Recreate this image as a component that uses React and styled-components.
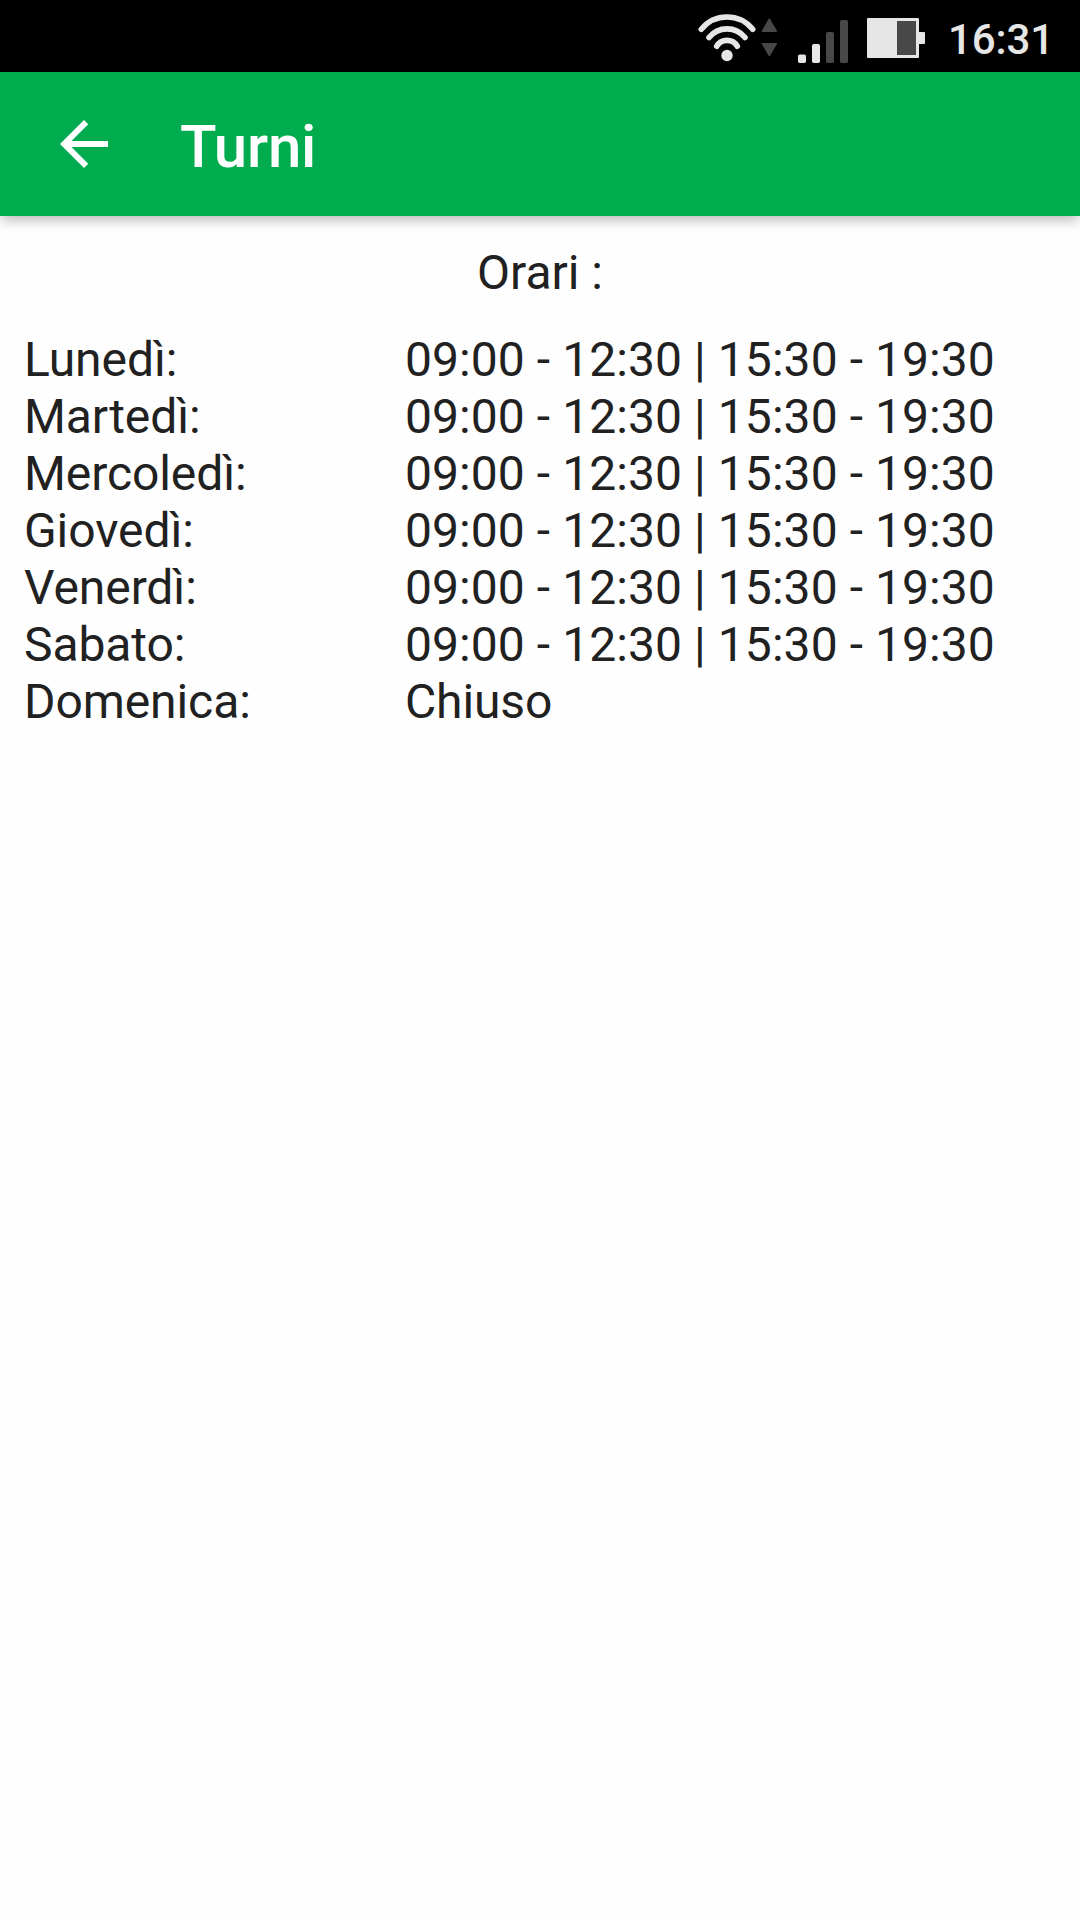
import React from "react";
import styled, { createGlobalStyle } from "styled-components";

const GlobalStyle = createGlobalStyle`
  body {
    margin: 0;
    background: #fefefe;
    font-family: Roboto, "Noto Sans", sans-serif;
    color: #212121;
  }
`;

const Screen = styled.div`
  display: flex;
  flex-direction: column;
  width: 1080px;
  height: 1920px;
  overflow: hidden;
  background: #fefefe;
`;

const StatusBar = styled.div`
  display: flex;
  justify-content: flex-end;
  flex: none;
  gap: 18px;
  height: 72px;
  padding-right: 27px;
  box-sizing: border-box;
  background: #000;
`;

const StatusIcons = styled.svg`
  flex: none;
  display: block;
  width: 240px;
  height: 72px;
`;

const Clock = styled.time`
  width: 105px;
  padding-top: 4px;
  text-align: right;
  font-size: 42px;
  font-weight: 500;
  letter-spacing: -0.1px;
  line-height: 72px;
  color: #e6e6e6;
`;

const AppBar = styled.header`
  display: flex;
  align-items: center;
  flex: none;
  gap: 60px;
  height: 144px;
  padding-left: 48px;
  box-sizing: border-box;
  background: #00ac4e;
  box-shadow: 0 5px 12px -1px rgba(0, 0, 0, 0.28);
`;

const BackButton = styled.button`
  display: flex;
  flex: none;
  padding: 0;
  border: 0;
  background: none;
  color: #fff;

  svg {
    width: 72px;
    height: 72px;
    fill: currentColor;
  }
`;

const Title = styled.h1`
  margin: 0;
  padding-top: 6px;
  font-size: 60px;
  font-weight: 500;
  letter-spacing: -0.25px;
  line-height: 72px;
  color: #fff;
`;

const Content = styled.main`
  display: flex;
  flex-direction: column;
  gap: 30px;
  padding: 28px 24px 0;
  font-size: 48px;
  line-height: 57px;
`;

const Heading = styled.div`
  text-align: center;
`;

const Schedule = styled.div`
  display: flex;
  flex-direction: column;
`;

const DayRow = styled.div`
  display: grid;
  grid-template-columns: 381px 1fr;
  white-space: pre;
`;

const Day = styled.span`
  letter-spacing: -0.08px;
`;

const Hours = styled.span`
  letter-spacing: ${(p) => (p.$closed ? "-0.12px" : "0.07px")};
`;

const OPEN = "09:00 - 12:30 | 15:30 - 19:30";
const CLOSED = "Chiuso";

const DAYS = [
  ["Lunedì:", OPEN],
  ["Martedì:", OPEN],
  ["Mercoledì:", OPEN],
  ["Giovedì:", OPEN],
  ["Venerdì:", OPEN],
  ["Sabato:", OPEN],
  ["Domenica:", CLOSED],
];

export default function App() {
  return (
    <>
      <GlobalStyle />
      <Screen>
        <StatusBar>
          <StatusIcons viewBox="690 0 240 72">
            <g fill="none" stroke="#e6e6e6" strokeWidth="5.6" strokeLinecap="round">
              <path d="M701.3 29.3A33 33 0 0 1 752.7 29.3" />
              <path d="M709 37.6A23 23 0 0 1 745 37.6" />
              <path d="M716.7 46.2A12 12 0 0 1 737.3 46.2" />
            </g>
            <circle cx="727" cy="55.5" r="5.7" fill="#e6e6e6" />
            <g fill="#484848" stroke="#484848" strokeWidth="1.5" strokeLinejoin="round">
              <path d="M769.3 19L776.3 31.2H762.5Z" />
              <path d="M769.3 55.5L776.3 43.7H762.5Z" />
            </g>
            <rect x="798" y="54.5" width="8" height="8.5" rx="1.8" fill="#e6e6e6" />
            <rect x="812" y="44" width="8" height="19" rx="1.8" fill="#e6e6e6" />
            <rect x="826" y="32" width="8" height="31" rx="1.8" fill="#484848" />
            <rect x="840" y="20" width="8" height="43" rx="1.8" fill="#484848" />
            <rect x="867" y="18" width="52" height="40" rx="1" fill="#e6e6e6" />
            <rect x="918" y="32" width="7" height="12" rx="1" fill="#e6e6e6" />
            <rect x="897" y="21" width="19" height="34" fill="#484848" />
          </StatusIcons>
          <Clock>16:31</Clock>
        </StatusBar>
        <AppBar>
          <BackButton aria-label="Indietro">
            <svg viewBox="0 0 24 24">
              <path d="M20 11H7.83l5.59-5.59L12 4l-8 8 8 8 1.41-1.41L7.83 13H20v-2z" />
            </svg>
          </BackButton>
          <Title>Turni</Title>
        </AppBar>
        <Content>
          <Heading>Orari :</Heading>
          <Schedule>
            {DAYS.map(([day, hours]) => (
              <DayRow key={day}>
                <Day>{day}</Day>
                <Hours $closed={hours === CLOSED}>{hours}</Hours>
              </DayRow>
            ))}
          </Schedule>
        </Content>
      </Screen>
    </>
  );
}
